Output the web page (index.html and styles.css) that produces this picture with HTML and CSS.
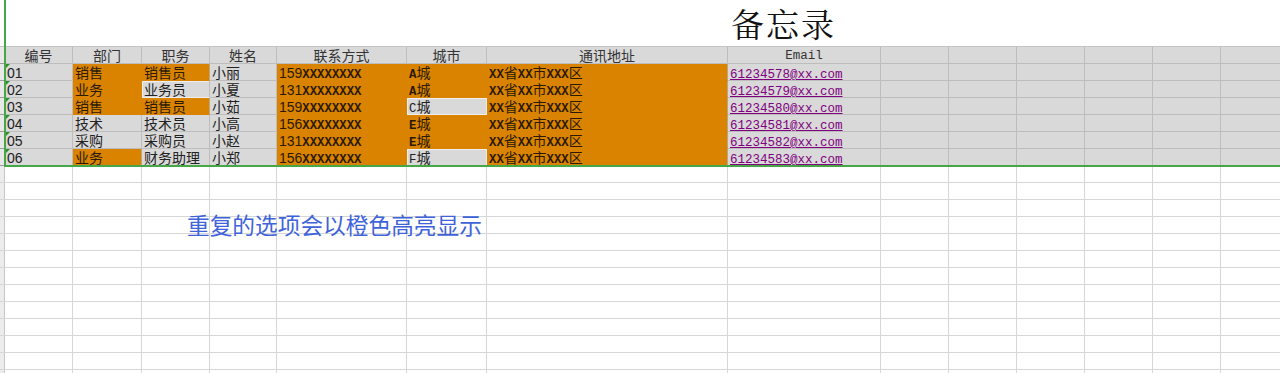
FILE: index.html
```html
<!DOCTYPE html>
<html lang="zh-CN">
<head>
<meta charset="utf-8">
<title>备忘录</title>
<link rel="stylesheet" href="styles.css">
</head>
<body>
<div class="page">
  <div class="sheet">
    <div class="title">备忘录</div>

    <div class="rh"></div>
    <div class="h">编号</div><div class="h">部门</div><div class="h">职务</div><div class="h">姓名</div>
    <div class="h">联系方式</div><div class="h">城市</div><div class="h">通讯地址</div><div class="h m">Email</div>
    <div class="h"></div><div class="h"></div><div class="h"></div><div class="h"></div><div class="h"></div><div class="h"></div>

    <div class="rh"></div>
    <div class="c num">01</div><div class="o">销售</div><div class="o er">销售员</div><div class="c">小丽</div>
    <div class="o">159<span class="m b">XXXXXXXX</span></div><div class="o"><span class="m b">A</span>城</div>
    <div class="o er"><span class="m b">XX</span>省<span class="m b">XX</span>市<span class="m b">XXX</span>区</div>
    <div class="c"><a class="mail m" href="#">61234578@xx.com</a></div>
    <div class="c"></div><div class="c"></div><div class="c"></div><div class="c"></div><div class="c"></div><div class="c"></div>

    <div class="rh"></div>
    <div class="c num">02</div><div class="o">业务</div><div class="g gr">业务员</div><div class="c">小夏</div>
    <div class="o">131<span class="m b">XXXXXXXX</span></div><div class="o"><span class="m b">A</span>城</div>
    <div class="o er"><span class="m b">XX</span>省<span class="m b">XX</span>市<span class="m b">XXX</span>区</div>
    <div class="c"><a class="mail m" href="#">61234579@xx.com</a></div>
    <div class="c"></div><div class="c"></div><div class="c"></div><div class="c"></div><div class="c"></div><div class="c"></div>

    <div class="rh"></div>
    <div class="c num">03</div><div class="o">销售</div><div class="o er">销售员</div><div class="c">小茹</div>
    <div class="o">159<span class="m b">XXXXXXXX</span></div><div class="g"><span class="m">C</span>城</div>
    <div class="o er"><span class="m b">XX</span>省<span class="m b">XX</span>市<span class="m b">XXX</span>区</div>
    <div class="c"><a class="mail m" href="#">61234580@xx.com</a></div>
    <div class="c"></div><div class="c"></div><div class="c"></div><div class="c"></div><div class="c"></div><div class="c"></div>

    <div class="rh"></div>
    <div class="c num">04</div><div class="c">技术</div><div class="c">技术员</div><div class="c">小高</div>
    <div class="o">156<span class="m b">XXXXXXXX</span></div><div class="o"><span class="m b">E</span>城</div>
    <div class="o er"><span class="m b">XX</span>省<span class="m b">XX</span>市<span class="m b">XXX</span>区</div>
    <div class="c"><a class="mail m" href="#">61234581@xx.com</a></div>
    <div class="c"></div><div class="c"></div><div class="c"></div><div class="c"></div><div class="c"></div><div class="c"></div>

    <div class="rh"></div>
    <div class="c num">05</div><div class="c">采购</div><div class="c">采购员</div><div class="c">小赵</div>
    <div class="o">131<span class="m b">XXXXXXXX</span></div><div class="o"><span class="m b">E</span>城</div>
    <div class="o er"><span class="m b">XX</span>省<span class="m b">XX</span>市<span class="m b">XXX</span>区</div>
    <div class="c"><a class="mail m" href="#">61234582@xx.com</a></div>
    <div class="c"></div><div class="c"></div><div class="c"></div><div class="c"></div><div class="c"></div><div class="c"></div>

    <div class="rh"></div>
    <div class="c num">06</div><div class="o er">业务</div><div class="c">财务助理</div><div class="c">小郑</div>
    <div class="o">156<span class="m b">XXXXXXXX</span></div><div class="g"><span class="m">F</span>城</div>
    <div class="o er"><span class="m b">XX</span>省<span class="m b">XX</span>市<span class="m b">XXX</span>区</div>
    <div class="c"><a class="mail m" href="#">61234583@xx.com</a></div>
    <div class="c"></div><div class="c"></div><div class="c"></div><div class="c"></div><div class="c"></div><div class="c"></div>
  </div>
  <div class="blank"></div>

  <div class="selection"></div>
  <div class="note">重复的选项会以橙色高亮显示</div>
</div>
</body>
</html>
```

FILE: styles.css
```css
* { box-sizing: border-box; }

html, body {
  margin: 0;
  padding: 0;
  background: #ffffff;
}

body {
  width: 1280px;
  height: 373px;
  overflow: hidden;
  font-family: "Liberation Sans", "Noto Sans CJK SC", sans-serif;
}

.page {
  position: relative;
  width: 1289px;
}

.sheet {
  display: grid;
  grid-template-columns: 5px 68px 69px 68px 67px 130px 80px 241px 153px repeat(6, 68px);
  grid-template-rows: 47px;
  grid-auto-rows: 17px;
}

.title {
  grid-column: 1 / -1;
  border-bottom: 1px solid #c4c4c4;
  padding-left: 731px;
  padding-top: 1px;
  font-family: "Noto Serif CJK SC", "Noto Sans CJK SC", serif;
  font-size: 33px;
  line-height: 43px;
  color: #111111;
  letter-spacing: 2px;
}

.rh {
  background: #e8e8e8;
  border-right: 1px solid #c6c6c6;
  border-bottom: 1px solid #9c9c9c;
}

.h, .c, .o, .g {
  border-right: 1px solid #bdbdbd;
  border-bottom: 1px solid #bdbdbd;
  font-size: 14px;
  line-height: 16px;
  white-space: nowrap;
  overflow: hidden;
  color: #222222;
}

.h {
  background: #d9d9d9;
  text-align: center;
  color: #333333;
  padding-top: 1px;
}

.h.m {
  font-size: 12.5px;
}

.c, .o, .g {
  padding: 1px 0 0 2px;
}

.c {
  background: #d9d9d9;
}

.o {
  background: #d98300;
  border-color: #d98300;
  color: #2b1a00;
}

.o.er {
  border-right-color: #bfa57a;
}

.g {
  background: #d9d9d9;
  border-right-color: #efefef;
  border-bottom-color: #efefef;
  box-shadow: inset 1px 1px 0 #efefef;
}

.g.gr {
  border-right-color: #bdbdbd;
}

.num {
  position: relative;
}

.num::before {
  content: "";
  position: absolute;
  left: 1px;
  top: 0;
  border-top: 4px solid #2f8f2f;
  border-right: 4px solid transparent;
}

.m {
  font-family: "Liberation Mono", "DejaVu Sans Mono", monospace;
  font-size: 12.3px;
}

.b {
  font-weight: bold;
  color: #2a1800;
}

.mail {
  color: #800080;
  text-decoration: underline;
  font-size: 12.5px;
}

.blank {
  --v: linear-gradient(#d6d6d6, #d6d6d6);
  height: 210px;
  background-color: #ffffff;
  background-image:
    repeating-linear-gradient(to bottom, transparent 0 16px, #d6d6d6 16px 17px),
    linear-gradient(#c6c6c6, #c6c6c6),
    linear-gradient(#ececec, #ececec),
    var(--v), var(--v), var(--v), var(--v), var(--v), var(--v), var(--v),
    var(--v), var(--v), var(--v), var(--v), var(--v), var(--v), var(--v);
  background-repeat: no-repeat;
  background-size:
    100% 100%,
    1px 100%,
    4px 100%,
    1px 100%, 1px 100%, 1px 100%, 1px 100%, 1px 100%, 1px 100%, 1px 100%,
    1px 100%, 1px 100%, 1px 100%, 1px 100%, 1px 100%, 1px 100%, 1px 100%;
  background-position:
    0 0,
    4px 0,
    0 0,
    72px 0, 141px 0, 209px 0, 276px 0, 406px 0, 486px 0, 727px 0,
    880px 0, 948px 0, 1016px 0, 1084px 0, 1152px 0, 1220px 0, 1288px 0;
}

.selection {
  position: absolute;
  left: 4px;
  top: 0;
  width: 1285px;
  height: 167px;
  border-left: 2px solid #45a745;
  border-bottom: 2px solid #45a745;
  pointer-events: none;
}

.note {
  position: absolute;
  left: 187px;
  top: 212px;
  font-family: "Noto Sans CJK SC", sans-serif;
  font-size: 22.7px;
  line-height: 26px;
  color: #3f63d9;
  white-space: nowrap;
}
```
